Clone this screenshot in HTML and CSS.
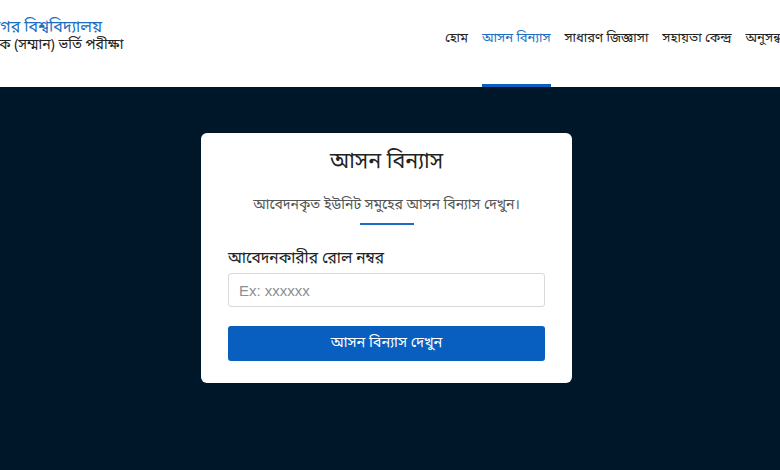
FILE: index.html
```html
<!DOCTYPE html>
<html lang="bn">
<head>
<meta charset="utf-8">
<title>আসন বিন্যাস</title>
<link rel="stylesheet" href="styles.css">
</head>
<body>
<header class="header">
  <div class="brand">
    <div class="brand-title">জাহাঙ্গীরনগর বিশ্ববিদ্যালয়</div>
    <div class="brand-sub">১ম বর্ষ স্নাতক (সম্মান) ভর্তি পরীক্ষা</div>
  </div>
  <nav class="nav">
    <a class="nav-item" href="#">হোম</a>
    <a class="nav-item active" href="#">আসন বিন্যাস</a>
    <a class="nav-item" href="#">সাধারণ জিজ্ঞাসা</a>
    <a class="nav-item" href="#">সহায়তা কেন্দ্র</a>
    <a class="nav-item" href="#">অনুসন্ধান</a>
  </nav>
</header>
<main class="main">
  <section class="card">
    <h1 class="card-title">আসন বিন্যাস</h1>
    <p class="card-sub">আবেদনকৃত ইউনিট সমুহের আসন বিন্যাস দেখুন।</p>
    <div class="divider"></div>
    <label class="label" for="roll">আবেদনকারীর রোল নম্বর</label>
    <input class="input" id="roll" type="text" placeholder="Ex: xxxxxx">
    <button class="btn" type="button">আসন বিন্যাস দেখুন</button>
  </section>
</main>
</body>
</html>
```

FILE: styles.css
```css
html, body {
  margin: 0;
  padding: 0;
}
body {
  width: 780px;
  height: 470px;
  overflow: hidden;
  background: #001629;
  font-family: "Noto Sans Bengali", "Noto Sans", "DejaVu Sans", sans-serif;
}
.header {
  height: 87px;
  background: #ffffff;
  display: flex;
  align-items: center;
  white-space: nowrap;
}
.brand {
  margin-left: -65px;
  margin-top: -13px;
}
.brand-title {
  color: #1b6ec2;
  font-size: 16px;
  line-height: 18px;
}
.brand-sub {
  color: #222;
  font-size: 14px;
  line-height: 18px;
}
.nav {
  display: flex;
  gap: 14px;
  height: 87px;
  margin-left: auto;
  margin-right: -13px;
}
.nav-item {
  display: flex;
  align-items: center;
  height: 87px;
  box-sizing: border-box;
  padding-bottom: 8px;
  font-size: 13px;
  color: #222;
  text-decoration: none;
  border-bottom: 3px solid transparent;
}
.nav-item.active {
  color: #1b6ec2;
  border-bottom-color: #0b5fc0;
}
.main {
  display: flex;
  justify-content: center;
  padding-top: 46px;
  padding-right: 7px;
}
.card {
  width: 371px;
  box-sizing: border-box;
  background: #fff;
  border-radius: 6px;
  padding: 15px 27px 22px;
  display: flex;
  flex-direction: column;
}
.card-title {
  margin: 0;
  text-align: center;
  font-size: 21.5px;
  line-height: 30px;
  font-weight: 400;
  color: #222;
}
.card-sub {
  margin: 18px 0 0;
  text-align: center;
  font-size: 14px;
  line-height: 20px;
  color: #555;
}
.divider {
  align-self: center;
  width: 54px;
  height: 2px;
  background: #1b6ec2;
  margin-top: 7px;
}
.label {
  margin-top: 23px;
  font-size: 15.5px;
  line-height: 22px;
  color: #222;
}
.input {
  margin-top: 3px;
  height: 34px;
  box-sizing: border-box;
  border: 1px solid #d7d9dc;
  border-radius: 3px;
  padding: 0 10px;
  font-family: "Liberation Sans", sans-serif;
  font-size: 15px;
  color: #222;
}
.input::placeholder {
  color: #8a8f94;
}
.btn {
  margin-top: 19px;
  height: 35px;
  border: 0;
  border-radius: 3px;
  background: #085fc0;
  color: #fff;
  font-family: inherit;
  font-size: 14.5px;
}
```
